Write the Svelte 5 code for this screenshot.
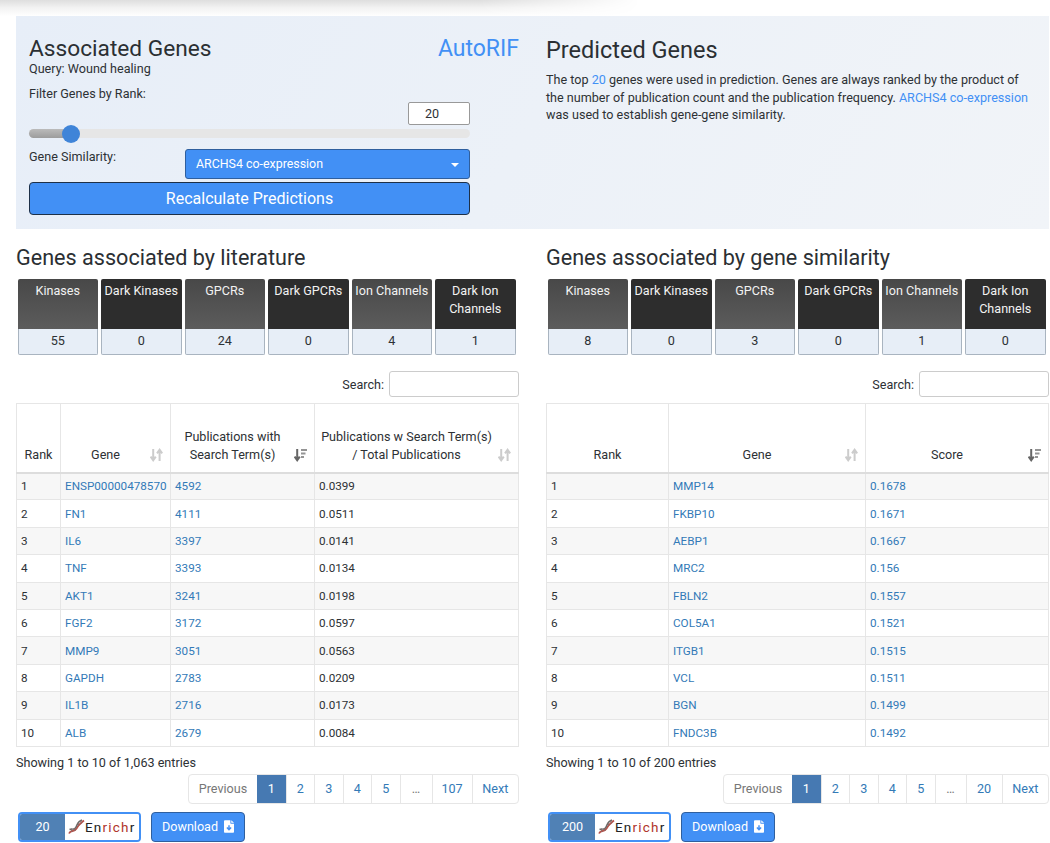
<script>
	const tiles = ['Kinases', 'Dark Kinases', 'GPCRs', 'Dark GPCRs', 'Ion Channels', 'Dark Ion Channels'];

	const literature = {
		title: 'Genes associated by literature',
		counts: [55, 0, 24, 0, 4, 1],
		rows: [
			['ENSP00000478570', '4592', '0.0399'],
			['FN1', '4111', '0.0511'],
			['IL6', '3397', '0.0141'],
			['TNF', '3393', '0.0134'],
			['AKT1', '3241', '0.0198'],
			['FGF2', '3172', '0.0597'],
			['MMP9', '3051', '0.0563'],
			['GAPDH', '2783', '0.0209'],
			['IL1B', '2716', '0.0173'],
			['ALB', '2679', '0.0084']
		],
		info: 'Showing 1 to 10 of 1,063 entries',
		last: '107',
		total: 20
	};

	const similarity = {
		title: 'Genes associated by gene similarity',
		counts: [8, 0, 3, 0, 1, 0],
		rows: [
			['MMP14', '0.1678'],
			['FKBP10', '0.1671'],
			['AEBP1', '0.1667'],
			['MRC2', '0.156'],
			['FBLN2', '0.1557'],
			['COL5A1', '0.1521'],
			['ITGB1', '0.1515'],
			['VCL', '0.1511'],
			['BGN', '0.1499'],
			['FNDC3B', '0.1492']
		],
		info: 'Showing 1 to 10 of 200 entries',
		last: '20',
		total: 200
	};

	let rank = $state(20);
	let searchLit = $state('');
	let searchSim = $state('');
</script>

{#snippet sortIcon(active)}
	<svg class="sort" class:active width="13" height="14" viewBox="0 0 13 14">
		<path d="M3.2 1v11M0.600 8.600l2.600 3.600 2.600-3.600" fill="none" stroke="currentColor" stroke-width="2" />
		{#if active}
			<path d="M7 1h6v2H7zM7 4.500h4.500v2H7zM7 8h3v2H7z" fill="currentColor" opacity="0.7" />
		{:else}
			<path d="M9.600 13V2M7 5.400l2.600-3.600 2.600 3.600" fill="none" stroke="currentColor" stroke-width="2" />
		{/if}
	</svg>
{/snippet}

{#snippet counters(counts)}
	<div class="tiles">
		{#each tiles as name, i}
			<div class="tile">
				<div class="tile-head" class:dark={i % 2 === 1}>{name}</div>
				<div class="tile-count">{counts[i]}</div>
			</div>
		{/each}
	</div>
{/snippet}

{#snippet footer(data, wide)}
	<div class="info">{data.info}</div>
	<div class="pager-row">
		<div class="pager" class:wide>
			<span class="page prev">Previous</span>
			<span class="page current">1</span>
			{#each ['2', '3', '4', '5'] as p}
				<span class="page num">{p}</span>
			{/each}
			<span class="page dots">…</span>
			<span class="page last">{data.last}</span>
			<span class="page next">Next</span>
		</div>
	</div>
	<div class="actions">
		<div class="enrichr">
			<span class="enrichr-count">{data.total}</span>
			<span class="enrichr-logo">
				<svg width="17" height="16" viewBox="0 0 17 16">
					<path d="M1 14.500C3 10 6 14 8.500 9.500S11.500 5 16 1.500" fill="none" stroke="#b5524a" stroke-width="1.800" />
					<path d="M1.500 10.500C5 9 6 12 8 8s2-6 6-7" fill="none" stroke="#6b6b6b" stroke-width="1.500" />
					<path d="M4 13l-.8-3M7 12L6 9M11 6.500 9.500 4M13.500 4.500 12.500 1.500" stroke="#8a6a66" stroke-width="1" />
				</svg>
				<span class="en">En</span><span class="rich">rich</span><span class="en">r</span>
			</span>
		</div>
		<button class="download">
			Download
			<svg width="10" height="13" viewBox="0 0 11 14">
				<path d="M0 1.200C0 .5.500 0 1.200 0H7v3.500c0 .3.200.5.500.5H11v8.800c0 .7-.5 1.200-1.200 1.200H1.200C.5 14 0 13.500 0 12.800z" fill="#fff" />
				<path d="M8 0l3 3H8z" fill="#fff" />
				<path d="M5.500 5.500v4.500M3.200 8l2.300 2.600L7.800 8" fill="none" stroke="#4290f5" stroke-width="1.600" />
			</svg>
		</button>
	</div>
{/snippet}

<div class="topshadow"></div>

<main>
	<section class="hero">
		<div class="assoc">
			<div class="assoc-head">
				<h2>Associated Genes</h2>
				<a href="#top" class="autorif">AutoRIF</a>
			</div>
			<div class="query">Query: Wound healing</div>
			<div class="filter-label">Filter Genes by Rank:</div>
			<div class="rank-box">
				<input class="rank-input" bind:value={rank} />
			</div>
			<div class="slider">
				<div class="slider-fill"></div>
				<div class="slider-handle"></div>
			</div>
			<div class="similarity">
				<span>Gene Similarity:</span>
				<div class="select">
					ARCHS4 co-expression
					<span class="caret"></span>
				</div>
			</div>
			<button class="recalc">Recalculate Predictions</button>
		</div>
		<div class="predicted">
			<h2>Predicted Genes</h2>
			<p>
				The top <a href="#top">20</a> genes were used in prediction. Genes are always ranked by the product of
				the number of publication count and the publication frequency. <a href="#top">ARCHS4 co-expression</a>
				was used to establish gene-gene similarity.
			</p>
		</div>
	</section>

	<section class="results">
		<div class="col">
			<h3>{literature.title}</h3>
			{@render counters(literature.counts)}
			<label class="search">Search: <input bind:value={searchLit} /></label>
			<table class="lit">
				<thead>
					<tr>
						<th class="c-rank">Rank</th>
						<th class="sortable">Gene {@render sortIcon(false)}</th>
						<th class="sortable">Publications with<br />Search Term(s) {@render sortIcon(true)}</th>
						<th class="sortable">Publications w Search Term(s)<br />/ Total Publications {@render sortIcon(false)}</th>
					</tr>
				</thead>
				<tbody>
					{#each literature.rows as row, i}
						<tr>
							<td>{i + 1}</td>
							<td><a href="#top">{row[0]}</a></td>
							<td><a href="#top">{row[1]}</a></td>
							<td>{row[2]}</td>
						</tr>
					{/each}
				</tbody>
			</table>
			{@render footer(literature, false)}
		</div>

		<div class="col">
			<h3>{similarity.title}</h3>
			{@render counters(similarity.counts)}
			<label class="search">Search: <input bind:value={searchSim} /></label>
			<table class="sim">
				<thead>
					<tr>
						<th class="c-rank">Rank</th>
						<th class="sortable">Gene {@render sortIcon(false)}</th>
						<th class="sortable">Score {@render sortIcon(true)}</th>
					</tr>
				</thead>
				<tbody>
					{#each similarity.rows as row, i}
						<tr>
							<td>{i + 1}</td>
							<td><a href="#top">{row[0]}</a></td>
							<td><a href="#top">{row[1]}</a></td>
						</tr>
					{/each}
				</tbody>
			</table>
			{@render footer(similarity, true)}
		</div>
	</section>
</main>

<style>
	:global(body) {
		background: #fff;
		color: #2d3135;
		font-family: Roboto, "Noto Sans", sans-serif;
		font-size: 12.6px;
		overflow: hidden;
	}

	.topshadow {
		height: 16px;
		width: 640px;
		margin-bottom: -16px;
		background: linear-gradient(#dedede, #f3f3f3 50%, #fff);
		mask-image: linear-gradient(to right, #000 75%, transparent);
	}

	main {
		padding: 16px 1px 0 16px;
	}

	a {
		color: #337ab7;
		text-decoration: none;
	}

	.hero {
		display: grid;
		grid-template-columns: 530px 1fr;
		height: 213px;
		background: linear-gradient(120deg, #e7eef8, #f1f4f8);
	}

	.assoc {
		padding: 19px 0 0 13px;
		width: 441px;
	}

	.assoc-head {
		display: flex;
		justify-content: space-between;
		align-items: baseline;
		width: 490px;
	}

	.assoc h2 {
		font-size: 22.7px;
	}

	h2 {
		margin: 0;
		font-size: 23.5px;
		font-weight: 400;
		line-height: 28px;
		color: #2b2f33;
	}

	.autorif {
		color: #4290f5;
		font-size: 23px;
	}

	.query {
		line-height: 14px;
		margin-top: -1px;
	}

	.filter-label {
		margin-top: 11px;
		line-height: 14px;
	}

	.rank-box {
		display: flex;
		justify-content: flex-end;
		margin-top: 1px;
	}

	.rank-input {
		box-sizing: border-box;
		width: 62px;
		height: 23px;
		border: 1px solid #999;
		border-radius: 2px;
		background: #fff;
		text-align: center;
		font: inherit;
		color: inherit;
		padding: 0 14px 0 0;
	}

	.slider {
		position: relative;
		height: 9px;
		margin-top: 4px;
		border-radius: 5px;
		background: #e6e6e6;
	}

	.slider-fill {
		width: 42px;
		height: 100%;
		border-radius: 5px 0 0 5px;
		background: linear-gradient(#bbb, #9c9c9c);
	}

	.slider-handle {
		position: absolute;
		left: 33px;
		top: -4px;
		width: 18px;
		height: 18px;
		border-radius: 50%;
		background: #3f84d8;
	}

	.similarity {
		display: flex;
		justify-content: space-between;
		margin-top: 11px;
		line-height: 16px;
	}

	.select {
		position: relative;
		box-sizing: border-box;
		width: 285px;
		height: 30px;
		padding: 6px 10px;
		background: #4290f5;
		border: 1px solid #2f5f9e;
		border-radius: 3px;
		color: #fff;
		font-size: 12.4px;
	}

	.caret {
		position: absolute;
		right: 10px;
		top: 13px;
		border-top: 4px solid #fff;
		border-left: 4px solid transparent;
		border-right: 4px solid transparent;
	}

	.recalc {
		display: block;
		width: 100%;
		height: 33px;
		margin-top: 3px;
		background: #4290f5;
		border: 1px solid #1d3048;
		border-radius: 4px;
		color: #fff;
		font: inherit;
		font-size: 16px;
	}

	.predicted {
		padding-top: 20px;
	}

	.predicted p {
		margin: 7px 0 0;
		line-height: 17.7px;
		width: 488px;
	}

	.predicted a {
		color: #4290f5;
	}

	.results {
		display: grid;
		grid-template-columns: 503px 503px;
		gap: 27px;
	}

	h3 {
		margin: 16px 0 0;
		font-size: 21.6px;
		font-weight: 400;
		line-height: 26px;
		color: #2b2f33;
	}

	.tiles {
		display: grid;
		grid-template-columns: repeat(6, 80.5px);
		gap: 3px;
		margin: 8px 0 0 1.5px;
	}

	.tile-head {
		box-sizing: border-box;
		height: 50px;
		padding: 3px 1px 0;
		background: linear-gradient(#484848, #5c5c5c);
		color: #f2f2f2;
		text-align: center;
		line-height: 18px;
		border-radius: 2px 2px 0 0;
	}

	.tile-head.dark {
		background: #2d2d2d;
	}

	.tile-count {
		box-sizing: border-box;
		height: 26px;
		line-height: 24px;
		background: #e7eef7;
		border: 1px solid #a9b4c0;
		border-top: 0;
		border-radius: 0 0 2px 2px;
		text-align: center;
	}

	.search {
		display: flex;
		justify-content: flex-end;
		align-items: center;
		gap: 5px;
		margin-top: 16px;
	}

	.search input {
		box-sizing: border-box;
		width: 130px;
		height: 26px;
		border: 1px solid #ccc;
		border-radius: 3px;
		background: #fff;
	}

	table {
		width: 100%;
		table-layout: fixed;
		border-collapse: collapse;
		margin-top: 6px;
	}

	th {
		position: relative;
		box-sizing: border-box;
		height: 69px;
		padding: 0 24px 8px 4px;
		vertical-align: bottom;
		font-weight: 400;
		line-height: 18px;
		text-align: center;
		border: 1px solid #e6e6e6;
		border-bottom: 2px solid #ddd;
	}

	th.c-rank {
		padding: 0 0 8px;
	}

	.sort {
		position: absolute;
		right: 7px;
		bottom: 10px;
		color: #ccc;
	}

	.sort.active {
		color: #666;
	}

	td {
		box-sizing: border-box;
		height: 27.4px;
		padding: 0 4px;
		border: 1px solid #e6e6e6;
		font-size: 11.7px;
	}

	tbody tr:nth-child(odd) {
		background: #f7f7f7;
	}

	.lit th:nth-child(1) { width: 44px; }
	.lit th:nth-child(2) { width: 110px; }
	.lit th:nth-child(3) { width: 144px; }
	.sim th:nth-child(1) { width: 122px; }
	.sim th:nth-child(2) { width: 197px; }

	.info {
		margin-top: 8px;
		line-height: 15px;
	}

	.pager-row {
		display: flex;
		justify-content: flex-end;
		margin-top: 4px;
	}

	.pager {
		display: flex;
		height: 30px;
		border: 1px solid #e6e6e6;
		border-radius: 4px;
		box-sizing: border-box;
		overflow: hidden;
	}

	.page {
		display: flex;
		align-items: center;
		justify-content: center;
		box-sizing: border-box;
		width: 28.5px;
		color: #337ab7;
		border-left: 1px solid #e6e6e6;
	}

	.prev {
		width: 68px;
		color: #777;
		border-left: 0;
	}

	.current {
		background: #4679b2;
		color: #fff;
		border-left: 0;
	}

	.dots {
		width: 32px;
		color: #777;
	}

	.last {
		width: 40px;
	}

	.next {
		width: 46.5px;
	}

	.pager.wide .last {
		width: 36px;
	}

	.pager.wide .dots {
		width: 31px;
	}

	.actions {
		display: flex;
		gap: 10px;
		margin: 8px 0 0 2px;
	}

	.enrichr {
		display: flex;
		box-sizing: border-box;
		width: 123px;
		height: 30px;
		border: 2px solid #4290f5;
		border-radius: 4px;
		overflow: hidden;
	}

	.enrichr-count {
		display: flex;
		align-items: center;
		justify-content: center;
		width: 45px;
		background: #5081b5;
		color: #fff;
	}

	.enrichr-logo {
		flex: 1;
		display: flex;
		align-items: center;
		padding-left: 3px;
		background: #fff;
		font-size: 13.5px;
		letter-spacing: 1.2px;
	}

	.en {
		color: #222;
	}

	.rich {
		color: #b0352c;
	}

	.download {
		display: flex;
		align-items: center;
		gap: 6px;
		box-sizing: border-box;
		width: 94px;
		height: 30px;
		padding: 0 0 0 10px;
		background: #4290f5;
		border: 1px solid #2f5f9e;
		border-radius: 4px;
		color: #fff;
		font: inherit;
	}
</style>
